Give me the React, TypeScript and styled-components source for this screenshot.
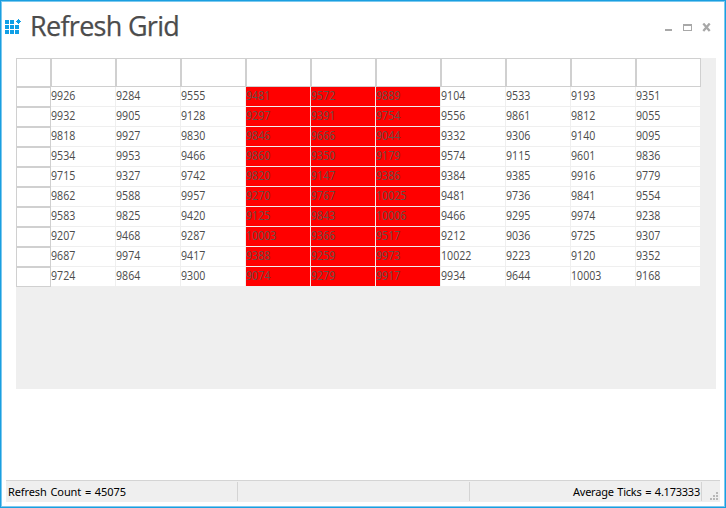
import React from 'react';
import styled, { createGlobalStyle } from 'styled-components';

const GlobalStyle = createGlobalStyle`
  * { box-sizing: border-box; }
  body { margin: 0; background: #fff; }
`;

const Window = styled.div`
  width: 726px;
  height: 508px;
  display: flex;
  flex-direction: column;
  background: #fff;
  border: 1px solid #1a9fe0;
  box-shadow: inset 0 0 0 1px #7cc9ef;
  padding: 0 5px 5px;
  font-family: 'Open Sans', 'Noto Sans', sans-serif;
  overflow: hidden;
`;

const TitleBar = styled.header`
  height: 57px;
  display: flex;
  align-items: flex-start;
  margin-left: -1px;
`;

const Title = styled.h1`
  flex: 1;
  margin: 5px 0 0 9px;
  font-size: 27px;
  line-height: 40px;
  font-weight: 400;
  letter-spacing: -0.7px;
  color: #4c4c4c;
  -webkit-text-stroke: 0.25px #4c4c4c;
  white-space: nowrap;
`;

const AppIcon = styled.svg`
  flex: none;
  margin-top: 17px;
`;

const Controls = styled.svg`
  flex: none;
  margin: 22px 9px 0 0;
`;

const GridPanel = styled.main`
  width: 700px;
  height: 331px;
  margin-left: 10px;
  background: #efefef;
`;

const Row = styled.div<{ $height: number }>`
  display: flex;
  height: ${(p) => p.$height}px;
`;

const RowHeader = styled.div`
  width: 35px;
  background: #fff;
  border: 1px solid #d0d0d0;
`;

const ColumnHeader = styled.div`
  width: 65px;
  background: #fff;
  border: 1px solid #d0d0d0;
`;

const Cell = styled.div<{ $hot: boolean }>`
  width: 65px;
  padding-left: 0.4px;
  border-right: 1px solid #efefef;
  border-bottom: 1px solid #efefef;
  background: ${(p) => (p.$hot ? '#ff0000' : '#fff')};
  color: ${(p) => (p.$hot ? '#625248' : '#4c4c4c')};
  font-size: 12px;
  line-height: 18px;
`;

const CellText = styled.span`
  display: inline-block;
  vertical-align: top;
  transform: scaleX(0.885);
  transform-origin: left center;
`;

const StatusBar = styled.footer`
  margin-top: auto;
  height: 22px;
  display: flex;
  background: #efefef;
  border-top: 1px solid #d4d4d4;
  color: #000;
  font-family: 'Noto Sans', sans-serif;
  font-size: 11px;
`;

const StatusPane = styled.div<{ $width: number; $right?: boolean }>`
  width: ${(p) => p.$width}px;
  height: 19px;
  margin-top: 1px;
  padding: 0 1px 0 2px;
  line-height: 19px;
  text-align: ${(p) => (p.$right ? 'right' : 'left')};
  letter-spacing: ${(p) => (p.$right ? '-0.23px' : '-0.1px')};
  word-spacing: 1px;
  border-right: 1px solid #d4d4d4;
  white-space: nowrap;
`;

const Grip = styled.svg`
  margin: 11px 0 0 8px;
`;

const values = [
  [9926, 9284, 9555, 9481, 9572, 9889, 9104, 9533, 9193, 9351],
  [9932, 9905, 9128, 9297, 9391, 9754, 9556, 9861, 9812, 9055],
  [9818, 9927, 9830, 9846, 9666, 9044, 9332, 9306, 9140, 9095],
  [9534, 9953, 9466, 9860, 9350, 9179, 9574, 9115, 9601, 9836],
  [9715, 9327, 9742, 9820, 9147, 9386, 9384, 9385, 9916, 9779],
  [9862, 9588, 9957, 9270, 9767, 10025, 9481, 9736, 9841, 9554],
  [9583, 9825, 9420, 9125, 9843, 10006, 9466, 9295, 9974, 9238],
  [9207, 9468, 9287, 10003, 9366, 9517, 9212, 9036, 9725, 9307],
  [9687, 9974, 9417, 9388, 9259, 9973, 10022, 9223, 9120, 9352],
  [9724, 9864, 9300, 9074, 9279, 9917, 9934, 9644, 10003, 9168],
];

export default function App() {
  return (
    <>
      <GlobalStyle />
      <Window>
        <TitleBar>
          <AppIcon width="16" height="17" fill="#0f9fe6" shapeRendering="crispEdges">
            <path d="M0 2h4v4H0zM5 2h4v4H5zM0 7h4v4H0zM5 7h4v4H5zM10 7h4v4h-4zM0 12h4v4H0zM5 12h4v4H5zM10 12h4v4h-4z" />
            <path d="M13 1h1v1h1v1h1v1h-1v1h-1v1h-1V5h-1V4h-1V3h1V2h1z" />
          </AppIcon>
          <Title>Refresh Grid</Title>
          <Controls width="46" height="10" fill="#a8a8a8">
            <path d="M0 6h7v2H0z" />
            <path fillRule="evenodd" d="M18 1h9v7h-9zM19 3v4h7V3z" />
            <path d="M38.3 0.5l6.4 7.6M44.7 0.5l-6.4 7.6" fill="none" stroke="#a8a8a8" strokeWidth="2.3" />
          </Controls>
        </TitleBar>
        <GridPanel>
          <Row $height={29}>
            <RowHeader />
            {values[0].map((_, i) => (
              <ColumnHeader key={i} />
            ))}
          </Row>
          {values.map((row, r) => (
            <Row key={r} $height={20}>
              <RowHeader />
              {row.map((value, c) => (
                <Cell key={c} $hot={c >= 3 && c <= 5}>
                  <CellText>{value}</CellText>
                </Cell>
              ))}
            </Row>
          ))}
        </GridPanel>
        <StatusBar>
          <StatusPane $width={232}>Refresh Count = 45075</StatusPane>
          <StatusPane $width={232} />
          <StatusPane $width={232} $right>
            Average Ticks = 4.173333
          </StatusPane>
          <Grip width="8" height="8" fill="#b8b8b8" shapeRendering="crispEdges">
            <path d="M6 0h2v2H6zM3 3h2v2H3zM6 3h2v2H6zM0 6h2v2H0zM3 6h2v2H3zM6 6h2v2H6z" />
          </Grip>
        </StatusBar>
      </Window>
    </>
  );
}
